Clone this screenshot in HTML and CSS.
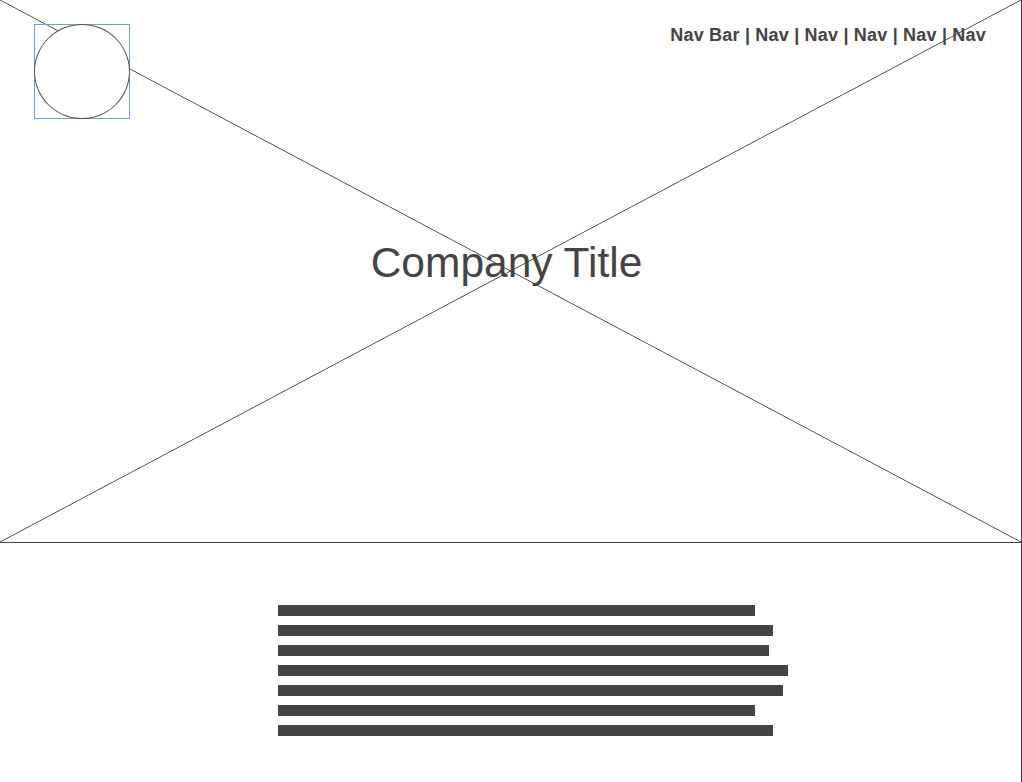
FILE: index.html
```html
<!DOCTYPE html>
<html lang="en">
<head>
  <meta charset="UTF-8" />
  <meta name="viewport" content="width=device-width, initial-scale=1.0" />
  <title>Company Title</title>
  <link rel="stylesheet" href="styles.css">
</head>
<body>
  <div class="page">
    <header class="hero">
      <div class="hero-top">
        <div class="logo">
          <div class="logo-circle"></div>
        </div>
        <nav class="nav">Nav Bar | Nav | Nav | Nav | Nav | Nav</nav>
      </div>
      <h1 class="title">Company Title</h1>
    </header>

    <section class="content">
      <div class="text-lines">
        <div class="line" style="width: 477px"></div>
        <div class="line" style="width: 495px"></div>
        <div class="line" style="width: 491px"></div>
        <div class="line" style="width: 510px"></div>
        <div class="line" style="width: 505px"></div>
        <div class="line" style="width: 477px"></div>
        <div class="line" style="width: 495px"></div>
      </div>
    </section>
  </div>
</body>
</html>
```

FILE: styles.css
```css
html, body {
  margin: 0;
  height: 100%;
}

body {
  font-family: "Liberation Sans", Arial, sans-serif;
  color: #444;
  background: white;
}

.page {
  width: 1021px;
  min-height: 100%;
  border-right: 1px solid #444;
}

.hero {
  height: 542px;
  border-bottom: 1px solid #444;
  display: flex;
  flex-direction: column;
  background:
    linear-gradient(to top right, transparent calc(50% - 0.8px), #444 50%, transparent calc(50% + 0.8px)),
    linear-gradient(to bottom right, transparent calc(50% - 0.8px), #444 50%, transparent calc(50% + 0.8px));
}

.hero-top {
  display: flex;
  justify-content: space-between;
  align-items: flex-start;
  padding: 24px 35px 0 34px;
}

.logo {
  width: 94px;
  height: 93px;
  border: 1px solid #6d9eeb;
  display: flex;
}

.logo-circle {
  flex: 1;
  border: 1px solid #555;
  border-radius: 50%;
  margin: -1px;
  background: white;
}

.nav {
  font-size: 18px;
  font-weight: bold;
  letter-spacing: 0.2px;
  margin-top: 1px;
}

.title {
  margin: 120px 0 0;
  text-align: center;
  font-size: 42.5px;
  font-weight: normal;
  padding-right: 8px;
}

.content {
  padding: 62px 0 0 278px;
}

.text-lines {
  display: flex;
  flex-direction: column;
  gap: 9px;
}

.line {
  height: 11px;
  background: #444;
}
```
